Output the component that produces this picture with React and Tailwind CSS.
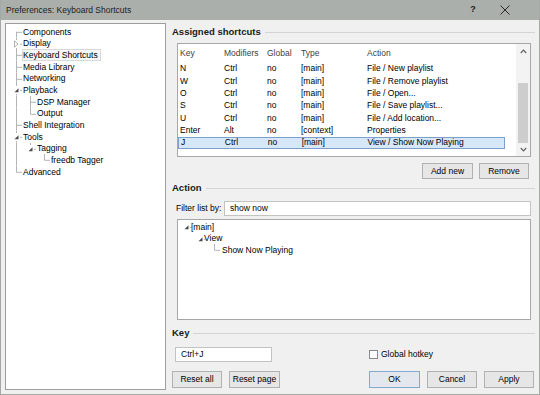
const prefsTree = [
  { label: "Components", g: ["top"] },
  { label: "Display", g: ["tee"], exp: "closed" },
  { label: "Keyboard Shortcuts", g: ["tee"], sel: true },
  { label: "Media Library", g: ["tee"] },
  { label: "Networking", g: ["tee"] },
  { label: "Playback", g: ["tee"], exp: "open" },
  { label: "DSP Manager", g: ["pipe", "tee"] },
  { label: "Output", g: ["pipe", "elbow"] },
  { label: "Shell Integration", g: ["tee"] },
  { label: "Tools", g: ["tee"], exp: "open" },
  { label: "Tagging", g: ["pipe", "elbow"], exp: "open" },
  { label: "freedb Tagger", g: ["pipe", "blank", "elbow"] },
  { label: "Advanced", g: ["elbow"] },
];

const actionTree = [
  { label: "[main]", g: ["stub"], exp: "open", shift: "-ml-[3px]" },
  { label: "View", g: ["blank", "stub"], exp: "open", shift: "-ml-[4px]" },
  { label: "Show Now Playing", g: ["blank", "blank", "elbow"], shift: "ml-0" },
];

const shortcuts = [
  ["N", "Ctrl", "no", "[main]", "File / New playlist"],
  ["W", "Ctrl", "no", "[main]", "File / Remove playlist"],
  ["O", "Ctrl", "no", "[main]", "File / Open..."],
  ["S", "Ctrl", "no", "[main]", "File / Save playlist..."],
  ["U", "Ctrl", "no", "[main]", "File / Add location..."],
  ["Enter", "Alt", "no", "[context]", "Properties"],
  ["J", "Ctrl", "no", "[main]", "View / Show Now Playing"],
];

const LINE = "#b3b3b3";

function Guide({ kind, exp }) {
  const hasH = kind === "tee" || kind === "elbow" || kind === "top" || kind === "stub";
  return (
    <svg width="14" height="12" viewBox="0 0 14 12" preserveAspectRatio="none" className="h-full shrink-0" shapeRendering="crispEdges">
      {(kind === "pipe" || kind === "tee") && <line x1="7.5" y1="0" x2="7.5" y2="12" stroke={LINE} />}
      {kind === "elbow" && <line x1="7.5" y1="0" x2="7.5" y2="6.5" stroke={LINE} />}
      {kind === "top" && <line x1="7.5" y1="6" x2="7.5" y2="12" stroke={LINE} />}
      {hasH && <line x1="7.5" y1="6.5" x2="13" y2="6.5" stroke={LINE} />}
      {exp && <rect x="3" y="2" width="8" height="8" fill="white" />}
      {exp === "open" && <polygon points="5.5,8.5 9.5,8.5 9.5,4.5" fill="#4a4a4a" shapeRendering="auto" />}
      {exp === "closed" && <polygon points="5.5,3 9,6.2 5.5,9.4" fill="white" stroke="#9a9a9a" strokeWidth="0.8" shapeRendering="auto" />}
    </svg>
  );
}

function TreeRow({ item }) {
  return (
    <div className="flex h-[11.67px] items-center">
      {item.g.map((k, i) => (
        <Guide key={i} kind={k} exp={i === item.g.length - 1 ? item.exp : undefined} />
      ))}
      <span
        className={`${item.shift || "-ml-[1px]"} whitespace-nowrap pr-[2px] leading-[10px] ${
          item.sel ? "border border-[#d9d9d9] bg-[#f6f6f6]" : "border border-transparent"
        }`}
      >
        {item.label}
      </span>
    </div>
  );
}

function Heading({ children }) {
  return (
    <div className="flex h-[14px] items-center">
      <span className="text-[9.5px] font-bold text-[#1a1a1a]">{children}</span>
      <div className="ml-[4px] flex-1 border-t border-[#d4d4d4]" />
    </div>
  );
}

function Button({ children, w, primary }) {
  return (
    <div
      className={`flex h-full items-center justify-center border ${w} ${
        primary ? "border-[#86a8cf] bg-[#e4e8ee]" : "border-[#b1b1b1] bg-[#e6e6e6]"
      }`}
    >
      {children}
    </div>
  );
}

function Chevron({ up }) {
  return (
    <svg width="7" height="5" viewBox="0 0 7 5">
      <polyline
        points={up ? "0.8,4 3.5,1.2 6.2,4" : "0.8,1 3.5,3.8 6.2,1"}
        fill="none"
        stroke="#606060"
        strokeWidth="1.2"
      />
    </svg>
  );
}

function ShortcutTable() {
  const cols = ["w-[44px]", "w-[43px]", "w-[34px]", "w-[66px]", "w-[137px]"];
  return (
    <div className="ml-[5px] mt-[4px] flex h-[114px] w-[354px] border border-[#a7a7a7] bg-white">
      <div className="flex-1 pl-[2px]">
        <div className="flex h-[18.7px] items-center text-[#404040]">
          {["Key", "Modifiers", "Global", "Type", "Action"].map((h, i) => (
            <span key={h} className={cols[i]}>{h}</span>
          ))}
        </div>
        {shortcuts.map((row, r) => {
          const sel = r === shortcuts.length - 1;
          return (
            <div
              key={r}
              className={`-ml-[2px] flex h-[12.33px] w-[327px] items-center pl-[2px] ${
                sel ? "border border-[#7c9fcc] bg-[#d6e7f8] pl-[1px]" : ""
              }`}
            >
              {row.map((c, i) => (
                <span key={i} className={`${cols[i]} whitespace-nowrap`}>{c}</span>
              ))}
            </div>
          );
        })}
      </div>
      <div className="flex w-[14px] flex-col items-center bg-[#f3f3f3]">
        <div className="flex h-[14px] items-center justify-center">
          <Chevron up />
        </div>
        <div className="flex-1">
          <div className="mt-[25px] h-[60px] w-[10px] bg-[#cdcdcd]" />
        </div>
        <div className="flex h-[13px] items-center justify-center">
          <Chevron />
        </div>
      </div>
    </div>
  );
}

export default function App() {
  return (
    <div className="flex h-[395px] w-[540px] flex-col overflow-hidden border-x border-b border-[#a5a9a5] bg-[#f0f0f0] font-['Liberation_Sans',Arial,sans-serif] text-[8.5px] text-black">
      <div className="flex h-[20px] shrink-0 items-center bg-[#abafab] pl-[5px] text-[#1c1c1c]">
        <span className="text-[8.5px]">Preferences: Keyboard Shortcuts</span>
        <span className="ml-auto w-[12px] text-center text-[9px] font-bold">?</span>
        <div className="ml-[19px] mr-[27px] flex w-[14px] justify-center">
          <svg width="10" height="10" viewBox="0 0 10 10">
            <path d="M0.5 0.5 L9.5 9.5 M9.5 0.5 L0.5 9.5" stroke="#2a2a2a" strokeWidth="1" />
          </svg>
        </div>
      </div>

      <div className="flex min-h-0 flex-1">
        <div className="ml-[4px] mt-[3px] h-[367px] w-[161px] shrink-0 border border-[#9d9d9d] bg-white pl-[3px] pt-[2px]">
          {prefsTree.map((item) => (
            <TreeRow key={item.label} item={item} />
          ))}
        </div>

        <div className="ml-[6px] flex w-[363px] flex-col">
          <div className="mt-[5px]">
            <Heading>Assigned shortcuts</Heading>
          </div>
          <ShortcutTable />

          <div className="mt-[6px] flex h-[16px] justify-end gap-[6px] pr-[6px]">
            <Button w="w-[51px]">Add new</Button>
            <Button w="w-[50px]">Remove</Button>
          </div>

          <div className="mt-[2px]">
            <Heading>Action</Heading>
          </div>

          <div className="mt-[6px] flex h-[15px] items-center pl-[4px] pr-[4px]">
            <span className="w-[48px] whitespace-nowrap">Filter list by:</span>
            <div className="flex h-full flex-1 items-center border border-[#c3c3c3] bg-white pl-[5px]">show now</div>
          </div>

          <div className="ml-[5px] mt-[3px] h-[101px] w-[354px] border border-[#a7a7a7] bg-white pl-[1px] pt-[1px]">
            {actionTree.map((item) => (
              <TreeRow key={item.label} item={item} />
            ))}
          </div>

          <div className="mt-[6px]">
            <Heading>Key</Heading>
          </div>

          <div className="mt-[7px] flex h-[15px] items-center">
            <div className="ml-[3px] flex h-full w-[97px] items-center border border-[#c3c3c3] bg-white pl-[5px]">Ctrl+J</div>
            <div className="ml-[97px] h-[9px] w-[9px] border border-[#8a8a8a] bg-white" />
            <span className="ml-[3px]">Global hotkey</span>
          </div>

          <div className="mt-[9px] flex h-[17px] pr-[1px]">
            <Button w="w-[50px]">Reset all</Button>
            <div className="ml-[7px]">
              <Button w="w-[51px]">Reset page</Button>
            </div>
            <div className="ml-auto flex gap-[7px]">
              <Button w="w-[51px]" primary>OK</Button>
              <Button w="w-[50px]">Cancel</Button>
              <Button w="w-[50px]">Apply</Button>
            </div>
          </div>
        </div>
      </div>
    </div>
  );
}
